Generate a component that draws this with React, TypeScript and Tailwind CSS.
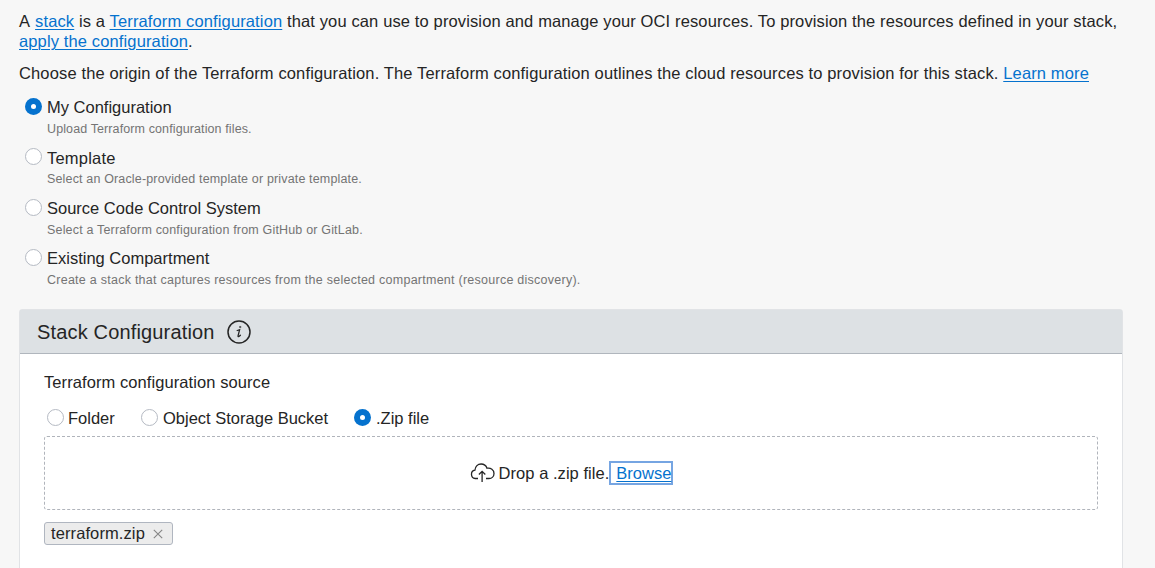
import type { ReactNode } from "react";

function Link({ children }: { children: ReactNode }) {
  return (
    <a href="#" className="text-[#0572ce] underline decoration-1 underline-offset-2">
      {children}
    </a>
  );
}

function Radio({ checked = false }: { checked?: boolean }) {
  return checked ? (
    <span className="flex size-[17px] shrink-0 items-center justify-center rounded-full bg-[#0572ce]">
      <span className="size-[5px] rounded-full bg-white" />
    </span>
  ) : (
    <span className="block size-[17px] shrink-0 rounded-full border border-[#b5bac3] bg-white" />
  );
}

const origins = [
  {
    title: "My Configuration",
    text: "Upload Terraform configuration files.",
    titleStyle: "",
    spacing: "tracking-[0.11px]",
    checked: true,
  },
  {
    title: "Template",
    text: "Select an Oracle-provided template or private template.",
    titleStyle: "pt-px -mb-px tracking-[0.2px]",
    spacing: "tracking-[0.155px]",
  },
  {
    title: "Source Code Control System",
    text: "Select a Terraform configuration from GitHub or GitLab.",
    titleStyle: "",
    spacing: "tracking-[0.175px]",
  },
  {
    title: "Existing Compartment",
    text: "Create a stack that captures resources from the selected compartment (resource discovery).",
    titleStyle: "",
    spacing: "tracking-[0.255px]",
  },
];

function InfoIcon() {
  return (
    <svg width="24" height="24" viewBox="0 0 24 24" fill="none" stroke="#252525" strokeLinecap="round">
      <circle cx="12" cy="12" r="11" strokeWidth="1.5" />
      <path d="M10.2 10.5L12.6 9.8L11.1 15.6C10.8 16.9 11.9 17 13.4 15.3" strokeWidth="1.3" />
      <circle cx="13.1" cy="7" r="0.8" fill="#252525" strokeWidth="0.3" />
    </svg>
  );
}

function CloudUploadIcon() {
  return (
    <svg width="25" height="20" viewBox="0 0 25 20" fill="none" stroke="#252525" strokeWidth="1.3">
      <path d="M8 15.5H5.2A4.2 4.2 0 0 1 4.9 7.2C5.2 3.5 7.8 1 11.1 1C13.9 1 16.1 2.7 17 5.2C20.7 4.4 24 6.9 24 10.4C24 13.4 21.8 15.5 19 15.5H16" />
      <path d="M12.1 19V8.3M8.9 11.5L12.1 8.3L15.3 11.5" />
    </svg>
  );
}

export default function App() {
  return (
    <div className="h-[568px] overflow-hidden bg-[#f7f7f7] pl-[19px] pr-8 pt-[11px] font-['Liberation_Sans',Arial,sans-serif] text-[16.5px] leading-5 text-[#252525]">
      <p className="whitespace-nowrap tracking-[0.13px]">
        <span className="tracking-[0.7px]">A </span><Link>stack</Link> is a <Link>Terraform configuration</Link> that you can use to provision and manage your OCI
        resources. To provision the resources defined in your stack,
        <br />
        <Link>apply the configuration</Link>.
      </p>
      <p className="mt-3 whitespace-nowrap tracking-[0.136px]">
        Choose the origin of the Terraform configuration. The Terraform configuration outlines the cloud resources to
        provision for this stack. <Link>Learn more</Link>
      </p>
      <div className="mt-3.5 flex flex-col pl-1.5">
        {origins.map((o) => (
          <div key={o.title} className="flex h-[50.4px] items-start gap-[5px]">
            <span className="pt-px">
              <Radio checked={o.checked} />
            </span>
            <div className="whitespace-nowrap">
              <div className={o.titleStyle}>{o.title}</div>
              <div className={`mt-[3px] text-[12.5px] leading-[18px] text-[#747474] ${o.spacing}`}>{o.text}</div>
            </div>
          </div>
        ))}
      </div>
      <section className="mt-[10px] h-[300px] rounded-t-[3px] border border-[#e1e3e6] bg-white">
        <header className="flex h-[44px] items-center gap-3 border-b border-[#b0b6bd] bg-[#dde1e4] pl-[17px] pt-px">
          <h2 className="w-[178px] whitespace-nowrap text-[20px] tracking-[0.16px]">Stack Configuration</h2>
          <InfoIcon />
        </header>
        <div className="pl-6 pr-6 pt-[18px]">
          <div className="tracking-[0.08px]">Terraform configuration source</div>
          <div className="mt-4 flex h-5 items-center pl-[3px]">
            <span className="flex w-[94px] items-center gap-1"><Radio />Folder</span>
            <span className="flex w-[213px] items-center gap-[5px]"><Radio />Object Storage Bucket</span>
            <span className="flex items-center gap-[5px]"><Radio checked />.Zip file</span>
          </div>
          <div className="mt-2 flex h-[74px] items-center justify-center rounded-[3px] border border-dashed border-[#b0b4bb] pl-px">
            <CloudUploadIcon />
            <span className="ml-1 whitespace-pre tracking-[0.04px]">Drop a .zip file.</span>
            <span className="mt-px flex h-[24px] items-center border-2 border-[#76a5e2] pl-[5px]">
              <Link>Browse</Link>
            </span>
          </div>
          <div className="mt-3 flex h-[23px] w-[129px] items-center justify-between rounded-[3px] border border-[#b0b6c0] bg-[#ececec] pl-1.5 pr-[9px]">
            <span className="tracking-[0.1px]">terraform.zip</span>
            <svg className="mt-px" width="10" height="10" viewBox="0 0 10 10" stroke="#858585" strokeWidth="1.1">
              <path d="M0.8 0.8L9.2 9.2M9.2 0.8L0.8 9.2" />
            </svg>
          </div>
        </div>
      </section>
    </div>
  );
}
